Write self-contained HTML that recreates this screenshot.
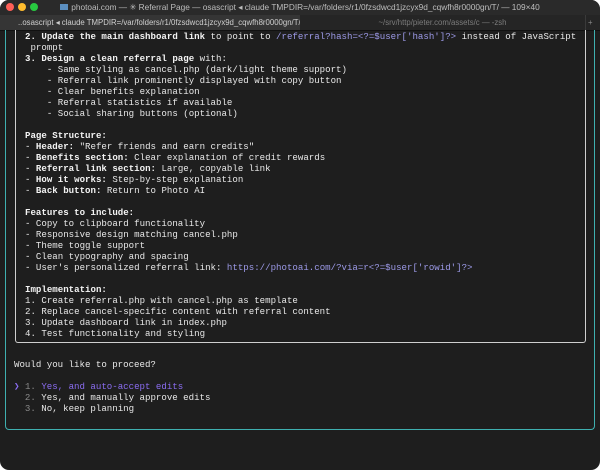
<!DOCTYPE html>
<html><head><meta charset="utf-8"><style>
html,body{margin:0;padding:0;background:#fff;}
body{width:600px;height:470px;overflow:hidden;position:relative;font-family:"Liberation Mono",monospace;}
.win{position:absolute;left:0;top:0;width:600px;height:470px;background:#1e1e1e;border-radius:9px;overflow:hidden;}
.title{position:absolute;left:0;top:0;width:600px;height:15px;background:#2a2a2a;font-family:"Liberation Sans",sans-serif;font-size:8.3px;color:#bdbdbd;text-align:center;line-height:15px;}
.dot{position:absolute;top:3px;width:8px;height:8px;border-radius:50%;}
.tabs{position:absolute;left:0;top:15px;width:600px;height:15px;background:#252525;border-bottom:1px solid #111;font-family:"Liberation Sans",sans-serif;font-size:7.8px;color:#cfcfcf;line-height:15px;}
.tab1{position:absolute;left:0;top:0;width:300px;height:15px;background:#353535;padding-left:18px;box-sizing:border-box;white-space:nowrap;overflow:hidden;}
.tab2{position:absolute;left:300px;top:0;width:285px;height:15px;text-align:center;color:#7c7c7c;border-right:1px solid #3a3a3a;}
.plus{position:absolute;left:588px;top:0;color:#888;}
.outer{position:absolute;left:5px;top:30px;width:588px;height:399px;border:1px solid #3fb0b0;border-top:none;border-radius:0 0 4px 4px;}
.box{position:absolute;left:15px;top:30px;width:569px;height:312px;border:1px solid #cfcfcf;border-top:none;border-radius:0 0 3px 3px;}
.l{position:absolute;left:25px;font-size:9.1px;line-height:11px;color:#e8e8e8;white-space:pre;}
b{font-weight:bold;color:#f4f4f4;}
.lk{color:#9d9ae8;}
.sel{color:#8b6df2;}
.dim{color:#8a8a8a;}
</style></head><body>
<div class="win">
<div class="title">
<div class="dot" style="left:6px;background:#fe5f57"></div>
<div class="dot" style="left:18px;background:#febc2e"></div>
<div class="dot" style="left:30px;background:#28c840"></div>
<span style="display:inline-block;width:8px;height:6px;background:#5b8fc0;margin-right:3px"></span>photoai.com — ✳ Referral Page — osascript ◂ claude TMPDIR=/var/folders/r1/0fzsdwcd1jzcyx9d_cqwfh8r0000gn/T/ — 109×40</div>
<div class="tabs">
<div class="tab1">..osascript ◂ claude TMPDIR=/var/folders/r1/0fzsdwcd1jzcyx9d_cqwfh8r0000gn/T/</div>
<div class="tab2">~/srv/http/pieter.com/assets/c — -zsh</div>
<div class="plus">+</div>
</div>
<div class="outer"></div>
<div class="box"></div>

<div class="l" style="top:31px"><b>2. Update the main dashboard link</b> to point to <span class="lk">/referral?hash=&lt;?=$user['hash']?&gt;</span> instead of JavaScript</div>
<div class="l" style="top:42px"> prompt</div>
<div class="l" style="top:53px"><b>3. Design a clean referral page</b> with:</div>
<div class="l" style="top:64px">    - Same styling as cancel.php (dark/light theme support)</div>
<div class="l" style="top:75px">    - Referral link prominently displayed with copy button</div>
<div class="l" style="top:86px">    - Clear benefits explanation</div>
<div class="l" style="top:97px">    - Referral statistics if available</div>
<div class="l" style="top:108px">    - Social sharing buttons (optional)</div>

<div class="l" style="top:130px"><b>Page Structure:</b></div>
<div class="l" style="top:141px">- <b>Header:</b> "Refer friends and earn credits"</div>
<div class="l" style="top:152px">- <b>Benefits section:</b> Clear explanation of credit rewards</div>
<div class="l" style="top:163px">- <b>Referral link section:</b> Large, copyable link</div>
<div class="l" style="top:174px">- <b>How it works:</b> Step-by-step explanation</div>
<div class="l" style="top:185px">- <b>Back button:</b> Return to Photo AI</div>

<div class="l" style="top:207px"><b>Features to include:</b></div>
<div class="l" style="top:218px">- Copy to clipboard functionality</div>
<div class="l" style="top:229px">- Responsive design matching cancel.php</div>
<div class="l" style="top:240px">- Theme toggle support</div>
<div class="l" style="top:251px">- Clean typography and spacing</div>
<div class="l" style="top:262px">- User's personalized referral link: <span class="lk">https://photoai.com/?via=r&lt;?=$user['rowid']?&gt;</span></div>

<div class="l" style="top:284px"><b>Implementation:</b></div>
<div class="l" style="top:295px">1. Create referral.php with cancel.php as template</div>
<div class="l" style="top:306px">2. Replace cancel-specific content with referral content</div>
<div class="l" style="top:317px">3. Update dashboard link in index.php</div>
<div class="l" style="top:328px">4. Test functionality and styling</div>

<div class="l" style="top:359px;left:14px">Would you like to proceed?</div>
<div class="l" style="top:381px;left:14px"><span class="sel">❯ </span><span class="dim">1.</span><span class="sel"> Yes, and auto-accept edits</span></div>
<div class="l" style="top:392px;left:14px">  <span class="dim">2.</span> Yes, and manually approve edits</div>
<div class="l" style="top:403px;left:14px">  <span class="dim">3.</span> No, keep planning</div>
</div>
</body></html>
